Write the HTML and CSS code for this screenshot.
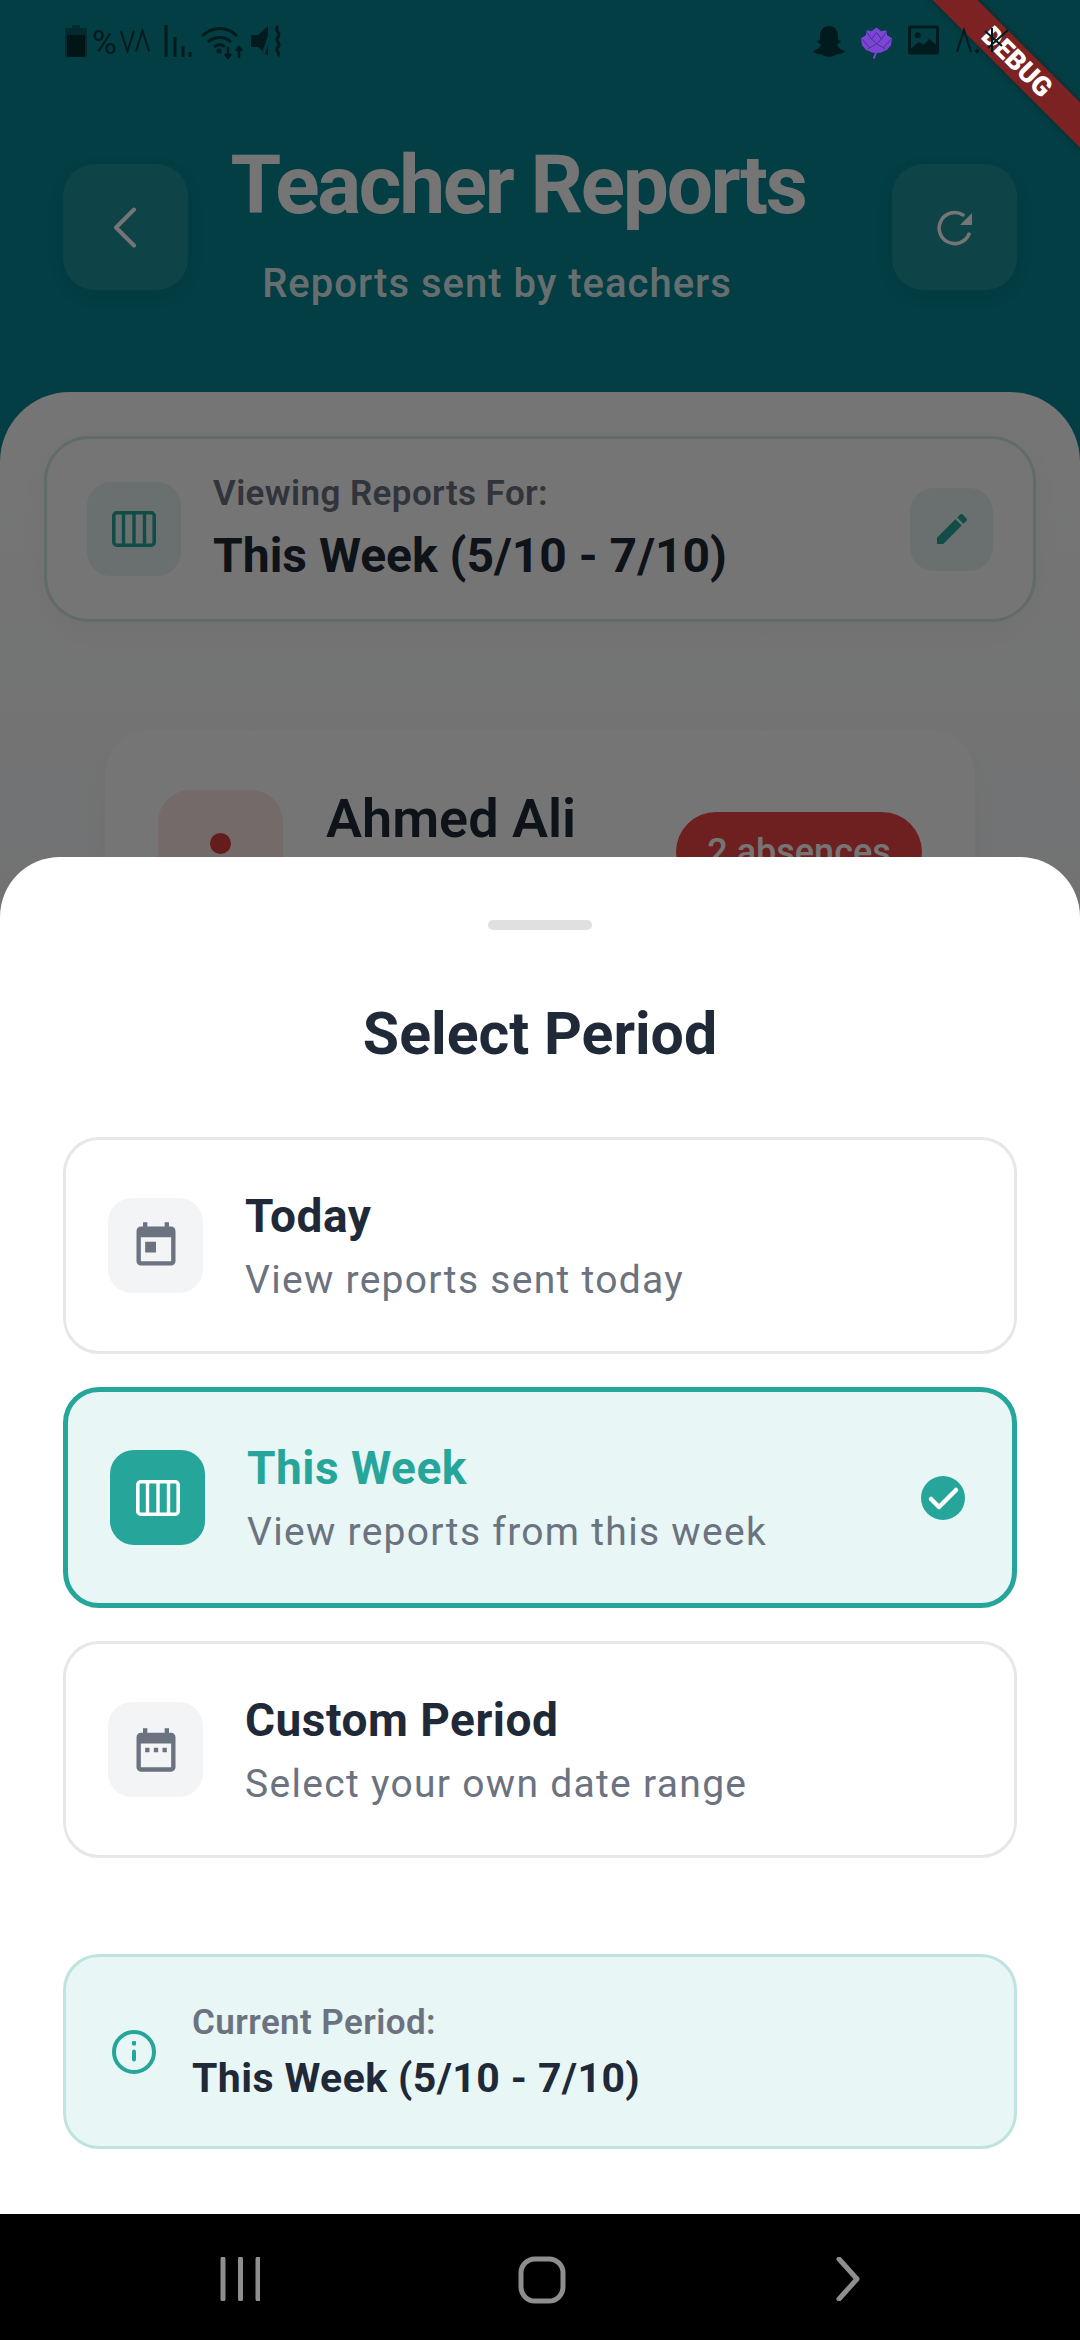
FILE: index.html
```html
<html>

<head>
  <title>Teacher Reports</title>
  <link rel="stylesheet" href="styles.css">
</head>

<body>
  <div class="screen">

    <div class="page">
      <header class="top">
        <button class="top-btn">
          <svg class="top-back" viewBox="0 0 24 41"><path d="M21 2.500L3 20.500l18 18" fill="none" stroke="#fff" stroke-width="4" stroke-linecap="round" stroke-linejoin="round"/></svg>
        </button>
        <div class="top-titles">
          <h1>Teacher Reports</h1>
          <p>Reports sent by teachers</p>
        </div>
        <button class="top-btn">
          <svg class="top-refresh" viewBox="0 0 36 36"><path d="M32 24A15.500 15.500 0 1 1 26 5" fill="none" stroke="#fff" stroke-width="3.500" stroke-linecap="round"/><path d="M35 3v12H23z" fill="#fff"/></svg>
        </button>
      </header>

      <section class="panel">
        <div class="viewing">
          <div class="viewing-icon">
            <svg viewBox="0 0 44 36"><rect x="1.800" y="1.800" width="40.400" height="32.400" rx="3" fill="none" stroke="#26a69a" stroke-width="3.600"/><path d="M11.500 2v32M22 2v32M32.500 2v32" stroke="#26a69a" stroke-width="3.400"/></svg>
          </div>
          <div class="viewing-text">
            <div class="viewing-label">Viewing Reports For:</div>
            <div class="viewing-value">This Week (5/10 - 7/10)</div>
          </div>
          <div class="viewing-edit">
            <svg viewBox="0 0 24 24"><path fill="#26a69a" d="M3 17.250V21h3.750L17.810 9.940l-3.750-3.750L3 17.250zM20.710 7.040c.39-.39.39-1.020 0-1.410l-2.340-2.340c-.39-.39-1.020-.39-1.410 0l-1.830 1.830 3.750 3.750 1.830-1.830z"/></svg>
          </div>
        </div>

        <div class="report">
          <div class="report-icon"><span class="report-dot"></span></div>
          <div class="report-name">Ahmed Ali</div>
          <div class="report-badge">2 absences</div>
        </div>
      </section>
    </div>

    <div class="scrim">
      <div class="sheet">
        <div class="handle"></div>
        <h2>Select Period</h2>

        <div class="options">
          <div class="option">
            <div class="option-icon">
              <svg viewBox="0 0 24 24"><path d="M19 3h-1V1h-2v2H8V1H6v2H5c-1.110 0-1.990.9-1.990 2L3 19c0 1.100.89 2 2 2h14c1.100 0 2-.9 2-2V5c0-1.100-.9-2-2-2zm0 16H5V8h14v11zM7 10h5v5H7z"/></svg>
            </div>
            <div class="option-text">
              <div class="option-title">Today</div>
              <div class="option-sub">View reports sent today</div>
            </div>
          </div>

          <div class="option selected">
            <div class="option-icon">
              <svg viewBox="0 0 44 36"><rect x="1.800" y="1.800" width="40.400" height="32.400" rx="3" fill="none" stroke="#fff" stroke-width="3.600"/><path d="M11.500 2v32M22 2v32M32.500 2v32" stroke="#fff" stroke-width="3.400"/></svg>
            </div>
            <div class="option-text">
              <div class="option-title">This Week</div>
              <div class="option-sub">View reports from this week</div>
            </div>
            <svg class="option-check" viewBox="0 0 44 44"><circle cx="22" cy="22" r="22" fill="#26a69a"/><path d="M10 23l8 8 17-17" fill="none" stroke="#fff" stroke-width="4.500" stroke-linecap="round" stroke-linejoin="round"/></svg>
          </div>

          <div class="option">
            <div class="option-icon">
              <svg viewBox="0 0 24 24"><path d="M9 11H7v2h2v-2zm4 0h-2v2h2v-2zm4 0h-2v2h2v-2zm2-7h-1V2h-2v2H8V2H6v2H5c-1.110 0-1.990.9-1.990 2L3 20c0 1.100.89 2 2 2h14c1.100 0 2-.9 2-2V6c0-1.100-.9-2-2-2zm0 16H5V9h14v11z"/></svg>
            </div>
            <div class="option-text">
              <div class="option-title">Custom Period</div>
              <div class="option-sub">Select your own date range</div>
            </div>
          </div>
        </div>

        <div class="current">
          <svg class="current-icon" viewBox="0 0 44 44"><circle cx="22" cy="22" r="20" fill="none" stroke="#26a69a" stroke-width="4"/><rect x="20" y="11" width="4" height="4.500" rx="1" fill="#26a69a"/><rect x="20" y="19.500" width="4" height="12" rx="2" fill="#26a69a"/></svg>
          <div>
            <div class="current-label">Current Period:</div>
            <div class="current-value">This Week (5/10 - 7/10)</div>
          </div>
        </div>
      </div>

      <nav class="navbar">
        <svg class="nav-recents" viewBox="0 0 40 44"><path d="M3 2v40M20.500 2v40M38 2v40" stroke="#8e8e8e" stroke-width="5" stroke-linecap="round"/></svg>
        <svg class="nav-home" viewBox="0 0 48 48"><rect x="3" y="3" width="42" height="42" rx="14" fill="none" stroke="#8e8e8e" stroke-width="5"/></svg>
        <svg class="nav-next" viewBox="0 0 24 44"><path d="M3 2l18 20L3 42" fill="none" stroke="#8e8e8e" stroke-width="5" stroke-linecap="round" stroke-linejoin="round"/></svg>
      </nav>
    </div>

    <div class="debug"><span>DEBUG</span></div>

    <div class="status">
      <div class="status-side">
        <svg class="st-battery" viewBox="0 0 22 32"><path d="M7 0h8v3h5a2 2 0 0 1 2 2v25a2 2 0 0 1-2 2H2a2 2 0 0 1-2-2V5a2 2 0 0 1 2-2h5z" fill="#032a2e"/><path d="M2 10h18v20a2 2 0 0 1-2 2H4a2 2 0 0 1-2-2z" fill="#011416"/></svg>
        <span class="st-pct">%</span>
        <svg class="st-volte" viewBox="0 0 34 26"><path d="M2 2l7 22 7-22M18 24l7-22 7 22" fill="none" stroke="#011a1d" stroke-width="2"/></svg>
        <svg class="st-signal" viewBox="0 0 28 32"><path d="M2 0v32M11 12v20M19 21v11M26 27v5" fill="none" stroke="#011a1d" stroke-width="3"/></svg>
        <svg class="st-wifi" viewBox="0 0 42 34"><g fill="none" stroke="#011a1d" stroke-width="3"><path d="M1 11c11-10 25-10 35 0"/><path d="M7 17c7-6 17-6 23 0"/><path d="M13 22c4-3 8-3 11 0"/></g><circle cx="18" cy="26" r="2.500" fill="#011a1d"/><path d="M27 22v10M24 29l3 4 3-4M38 33V23M35 26l3-4 3 4" fill="none" stroke="#011a1d" stroke-width="2.500"/></svg>
        <svg class="st-mute" viewBox="0 0 32 32"><path d="M0 10h7l10-9v30L7 22H0z" fill="#011a1d"/><path d="M22 0L12 30" stroke="#033c42" stroke-width="3"/><path d="M27 1c-5 5 4 6 0 11s4 6 0 10 3 5 0 9" fill="none" stroke="#011a1d" stroke-width="3"/></svg>
      </div>
      <div class="status-side">
        <svg class="st-ghost" viewBox="0 0 34 32"><path d="M17 1c6 0 9 5 9 10v4l3 1c0 2-3 2-4 4 1 3 4 5 8 6-1 2-3 2-5 3-2 0-4 0-6 2-3 1-7 1-10 0-2-2-4-2-6-2-2-1-4-1-5-3 4-1 7-3 8-6-1-2-4-2-4-4l3-1v-4C8 6 11 1 17 1z" fill="#011a1d"/></svg>
        <svg class="st-lotus" viewBox="0 0 34 33"><path d="M17 1l5 4 5-1 1 5 5 3-1 7-4 5-7 3h-8l-7-3-4-5-1-7 5-3 1-5 5 1z" fill="#7b45d6"/><path d="M17 6l-5 7 5 5 5-5zM2 13l8 9M32 13l-8 9M8 23l9-5 9 5M7 6l5 7M27 6l-5 7" fill="none" stroke="#4e2a93" stroke-width="1"/><path d="M17 26l-3 7" stroke="#7b45d6" stroke-width="2"/></svg>
        <svg class="st-picture" viewBox="0 0 32 30"><rect width="32" height="30" rx="3" fill="#011a1d"/><rect x="3" y="3" width="26" height="24" fill="#033c42"/><circle cx="10" cy="10" r="3" fill="#011a1d"/><path d="M3 24l8-7 5 3 6-6 7 6v9H3z" fill="#011a1d"/></svg>
        <svg class="st-dots" viewBox="0 0 54 26"><path d="M1 24L8 2l7 22" fill="none" stroke="#011a1d" stroke-width="2"/><circle cx="21" cy="23" r="2" fill="#011a1d"/><path d="M36 0v24M29 3l17 15M52 2L32 20" fill="none" stroke="#011a1d" stroke-width="2"/></svg>
      </div>
    </div>
  </div>
</body>

</html>
```

FILE: styles.css
```css
* {
  box-sizing: border-box;
}

html,
body {
  margin: 0;
  padding: 0;
}

body {
  font-family: Roboto, "Liberation Sans", sans-serif;
}

.screen {
  position: relative;
  width: 1080px;
  height: 2340px;
  overflow: hidden;
  background: #fff;
}

.page {
  height: 100%;
  padding-top: 84px;
  display: flex;
  flex-direction: column;
  background: #078794;
}

/* status bar, drawn over everything */
.status {
  position: absolute;
  top: 0;
  left: 0;
  width: 100%;
  padding: 25px 70px 0 65px;
  display: flex;
  justify-content: space-between;
  align-items: flex-start;
}

.status-side {
  display: flex;
  align-items: flex-start;
}

.st-battery { width: 22px; height: 32px; }
.st-pct { margin-left: 5px; font-size: 34px; line-height: 34px; color: #011a1d; }
.st-volte { width: 32px; height: 26px; margin: 3px 0 0 2px; }
.st-signal { width: 28px; height: 32px; margin-left: 13px; }
.st-wifi { width: 42px; height: 34px; margin-left: 9px; }
.st-mute { width: 32px; height: 32px; margin-left: 8px; }
.st-ghost { width: 34px; height: 32px; }
.st-lotus { width: 33px; height: 33px; margin: 1px 0 0 14px; }
.st-picture { width: 31px; height: 30px; margin-left: 15px; }
.st-dots { width: 54px; height: 26px; margin: 3px 0 0 17px; }

/* header */
.top {
  height: 308px;
  padding: 0 63px;
  display: flex;
  justify-content: space-between;
  align-items: flex-start;
}

.top-btn {
  width: 125px;
  height: 126px;
  margin-top: 80px;
  padding: 0;
  border: 0;
  border-radius: 32px;
  background: rgba(255, 255, 255, 0.1);
  box-shadow: 0 6px 20px rgba(0, 0, 0, 0.05);
  display: flex;
  align-items: center;
  justify-content: center;
}

.top-back { width: 24px; height: 41px; margin-right: 1px; }
.top-refresh { width: 36px; height: 36px; margin-top: 1px; }

.top-titles {
  margin: 54px 0 0 -44px;
  text-align: center;
}

.top-titles h1 {
  margin: 0;
  font-size: 82px;
  line-height: 94px;
  font-weight: 700;
  letter-spacing: -2.300px;
  white-space: nowrap;
  color: #fff;
}

.top-titles p {
  margin: 29px 42px 0 0;
  font-size: 40px;
  line-height: 46px;
  font-weight: 500;
  letter-spacing: 1px;
  white-space: nowrap;
  color: rgba(255, 255, 255, 0.9);
}

/* content behind the sheet */
.panel {
  flex: 1;
  background: linear-gradient(#fff, #f4f6f9 40%);
  border-radius: 70px 70px 0 0;
  padding: 44px 44px 0;
}

.viewing {
  height: 186px;
  padding: 0 40px;
  display: flex;
  align-items: center;
  background: #fff;
  border: 3px solid #d3ebe8;
  border-radius: 45px;
  box-shadow: 0 8px 30px rgba(0, 0, 0, 0.03);
}

.viewing-icon {
  width: 94px;
  height: 94px;
  border-radius: 24px;
  background: #e6f2f2;
  display: flex;
  align-items: center;
  justify-content: center;
}

.viewing-icon svg { width: 44px; height: 36px; }

.viewing-text {
  flex: 1;
  margin-left: 32px;
}

.viewing-label {
  font-size: 35px;
  line-height: 40px;
  font-weight: 600;
  letter-spacing: 0.400px;
  color: #6b7280;
}

.viewing-value {
  margin-top: 14px;
  font-size: 48px;
  line-height: 56px;
  font-weight: 700;
  color: #1f2937;
}

.viewing-edit {
  width: 83px;
  height: 83px;
  border-radius: 24px;
  background: #e6f2f2;
  display: flex;
  align-items: center;
  justify-content: center;
}

.viewing-edit svg { width: 40px; height: 40px; }

.report {
  margin: 108px 61px 0;
  height: 320px;
  padding: 60px 53px;
  display: flex;
  background: #fff;
  border-radius: 45px;
  box-shadow: 0 8px 30px rgba(0, 0, 0, 0.03);
}

.report-icon {
  width: 125px;
  height: 125px;
  flex-shrink: 0;
  border-radius: 32px;
  background: #fde8e8;
  display: flex;
  justify-content: center;
  padding-top: 43px;
}

.report-dot {
  width: 21px;
  height: 21px;
  border-radius: 50%;
  background: #dc3d3d;
}

.report-name {
  flex: 1;
  margin: -2px 0 0 43px;
  font-size: 54px;
  line-height: 62px;
  font-weight: 600;
  color: #1f2937;
}

.report-badge {
  width: 246px;
  height: 80px;
  margin-top: 22px;
  border-radius: 40px;
  background: #ef4444;
  color: #fff;
  font-size: 36px;
  line-height: 80px;
  font-weight: 500;
  text-align: center;
}

/* modal layer */
.scrim {
  position: absolute;
  inset: 0;
  display: flex;
  flex-direction: column;
  justify-content: flex-end;
  background: rgba(0, 0, 0, 0.54);
}

.sheet {
  height: 1357px;
  padding: 63px 63px 0;
  background: #fff;
  border-radius: 60px 60px 0 0;
}

.handle {
  width: 104px;
  height: 10px;
  margin: 0 auto;
  border-radius: 5px;
  background: #e0e0e0;
}

.sheet h2 {
  margin: 72px 0 0;
  height: 64px;
  font-size: 59px;
  line-height: 64px;
  font-weight: 700;
  text-align: center;
  color: #1f2937;
}

.options {
  margin-top: 71px;
  display: flex;
  flex-direction: column;
  gap: 33px;
}

.option {
  height: 217px;
  padding: 0 42px;
  display: flex;
  align-items: center;
  border: 3px solid #e5e7eb;
  border-radius: 36px;
  background: #fff;
}

.option-icon {
  width: 95px;
  height: 95px;
  flex-shrink: 0;
  border-radius: 24px;
  background: #f3f4f6;
  display: flex;
  align-items: center;
  justify-content: center;
}

.option-icon svg {
  width: 52px;
  height: 52px;
  fill: #6b7280;
}

.option-text {
  flex: 1;
  margin-left: 42px;
}

.option-title {
  font-size: 46px;
  line-height: 54px;
  font-weight: 700;
  letter-spacing: 0.500px;
  color: #1f2937;
}

.option-sub {
  margin-top: 14px;
  font-size: 39px;
  line-height: 46px;
  letter-spacing: 1.300px;
  color: #6b7280;
}

.option.selected {
  height: 221px;
  border: 5px solid #26a69a;
  background: #e8f6f6;
}

.option.selected .option-icon {
  background: #26a69a;
}

.option.selected .option-icon svg {
  width: 44px;
  height: 36px;
}

.option.selected .option-title {
  color: #26a69a;
}

.option-check {
  width: 44px;
  height: 44px;
  margin-right: 5px;
}

.current {
  height: 195px;
  margin-top: 96px;
  padding: 0 46px;
  display: flex;
  align-items: center;
  gap: 36px;
  border: 3px solid #bfe3e0;
  border-radius: 36px;
  background: #e9f6f6;
}

.current-icon {
  width: 44px;
  height: 44px;
}

.current-label {
  font-size: 35px;
  line-height: 40px;
  font-weight: 600;
  letter-spacing: 0.400px;
  color: #6b7280;
}

.current-value {
  margin-top: 12px;
  font-size: 41px;
  line-height: 46px;
  font-weight: 700;
  letter-spacing: 0.400px;
  color: #1f2937;
}

/* system nav */
.navbar {
  height: 126px;
  flex-shrink: 0;
  background: #000;
  padding: 43px 220px 0;
  display: flex;
  justify-content: space-between;
  align-items: flex-start;
}

.nav-recents { width: 40px; height: 44px; }
.nav-home { width: 48px; height: 48px; margin: -1px 12px 0 0; }
.nav-next { width: 24px; height: 44px; }

/* debug ribbon */
.debug {
  position: absolute;
  top: 46px;
  right: -47px;
  width: 220px;
  height: 32px;
  transform: rotate(45deg);
  background: #7d2222;
  box-shadow: 0 0 6px rgba(0, 0, 0, 0.35);
  display: flex;
  align-items: center;
  justify-content: center;
}

.debug span {
  font-size: 27px;
  line-height: 32px;
  font-weight: 900;
  color: #fff;
}
```
